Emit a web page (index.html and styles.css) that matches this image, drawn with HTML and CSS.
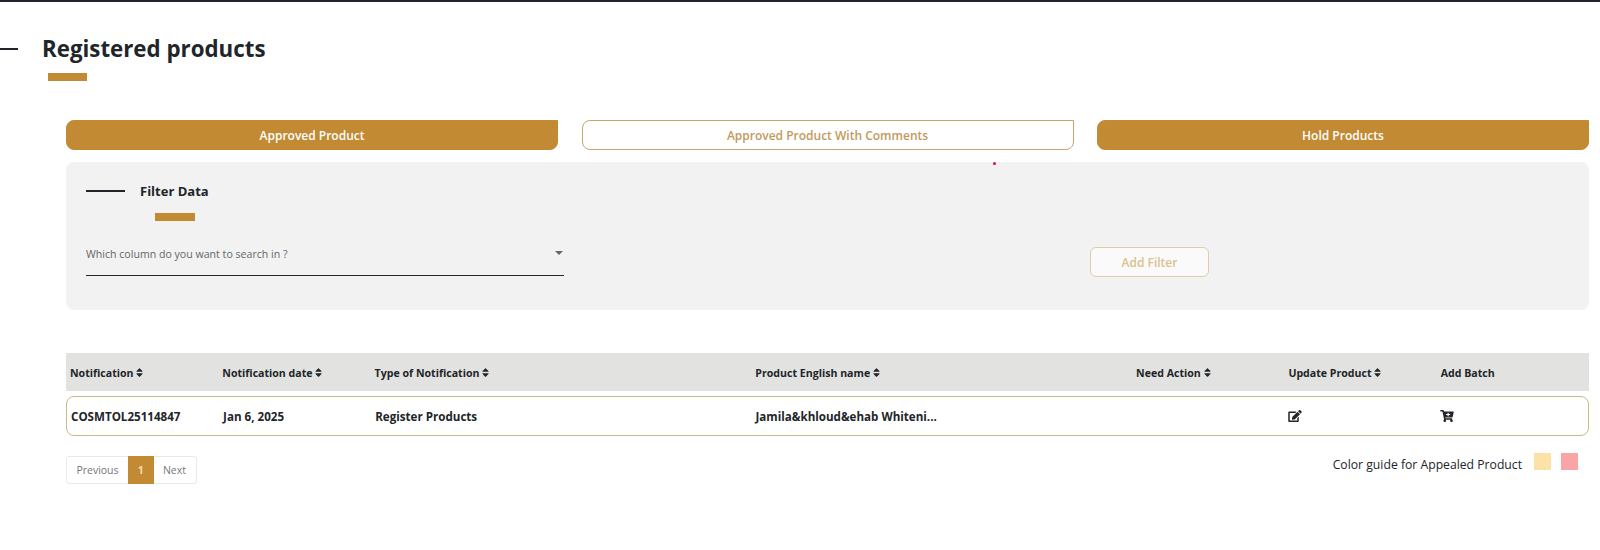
FILE: index.html
```html
<!DOCTYPE html>
<html lang="en">
<head>
<meta charset="utf-8">
<title>Registered products</title>
<link rel="stylesheet" href="styles.css">
</head>
<body>
<svg class="defs" width="0" height="0" aria-hidden="true">
  <symbol id="sort" viewBox="0 0 320 512"><path d="M41 288h238c21.4 0 32.1 25.9 17 41L177 448c-9.4 9.4-24.6 9.4-33.9 0L24 329c-15.1-15.1-4.4-41 17-41zm255-105L177 64c-9.4-9.4-24.6-9.4-33.9 0L24 183c-15.1 15.1-4.4 41 17 41h238c21.4 0 32.1-25.9 17-41z"/></symbol>
</svg>
<header class="page-head">
  <div class="head-line">
    <span class="dash"></span>
    <h1>Registered products</h1>
  </div>
  <span class="accent"></span>
</header>
<main class="content">
  <nav class="tabs">
    <button class="tab solid">Approved Product</button>
    <button class="tab outline">Approved Product With Comments</button>
    <button class="tab solid">Hold Products</button>
  </nav>
  <section class="filter">
    <span class="red-dot"></span>
    <div class="filter-head">
      <span class="filter-dash"></span>
      <h2>Filter Data</h2>
    </div>
    <span class="filter-accent"></span>
    <div class="filter-row">
      <div class="select"><span>Which column do you want to search in ?</span><i class="caret"></i></div>
      <button class="add-filter">Add Filter</button>
    </div>
  </section>
  <section class="table">
    <div class="tr head">
      <div>Notification <svg class="sort"><use href="#sort"/></svg></div>
      <div>Notification date <svg class="sort"><use href="#sort"/></svg></div>
      <div>Type of Notification <svg class="sort"><use href="#sort"/></svg></div>
      <div>Product English name <svg class="sort"><use href="#sort"/></svg></div>
      <div>Need Action <svg class="sort"><use href="#sort"/></svg></div>
      <div>Update Product <svg class="sort"><use href="#sort"/></svg></div>
      <div>Add Batch</div>
    </div>
    <div class="tr row">
      <div>COSMTOL25114847</div>
      <div>Jan 6, 2025</div>
      <div>Register Products</div>
      <div>Jamila&amp;khloud&amp;ehab Whiteni...</div>
      <div></div>
      <div><svg class="icon" viewBox="0 0 576 512"><path d="M402.6 83.2l90.2 90.2c3.8 3.8 3.8 10 0 13.8L274.4 405.6l-92.8 10.3c-12.4 1.4-22.9-9.1-21.5-21.5l10.3-92.8L388.8 83.2c3.8-3.8 10-3.8 13.8 0zm162-22.9l-48.8-48.8c-15.2-15.2-39.9-15.2-55.2 0l-35.4 35.4c-3.8 3.8-3.8 10 0 13.8l90.2 90.2c3.8 3.8 10 3.8 13.8 0l35.4-35.4c15.2-15.3 15.2-40 0-55.2zM384 346.2V448H64V128h229.8c3.2 0 6.2-1.3 8.5-3.5l40-40c7.6-7.6 2.2-20.5-8.5-20.5H48C21.5 64 0 85.5 0 112v352c0 26.5 21.5 48 48 48h352c26.5 0 48-21.5 48-48V306.2c0-10.7-12.9-16-20.5-8.5l-40 40c-2.2 2.3-3.5 5.3-3.5 8.5z"/></svg></div>
      <div><svg class="icon" viewBox="0 0 576 512"><path d="M504.717 320H211.572l6.545 32h268.418c15.401 0 26.816 14.301 23.403 29.319l-5.517 24.276C523.112 414.668 536 433.828 536 456c0 31.202-25.519 56.444-56.824 55.994-29.823-.429-54.35-24.631-55.155-54.447-.44-16.287 6.085-31.049 16.803-41.548H231.176C241.553 426.165 248 440.326 248 456c0 31.813-26.528 57.431-58.67 55.938-28.54-1.325-51.751-24.385-53.251-52.917-1.158-22.034 10.436-41.455 28.051-51.586L93.883 64H24C10.745 64 0 53.255 0 40V24C0 10.745 10.745 0 24 0h102.529c11.401 0 21.228 8.021 23.513 19.19L159.208 64H551.99c15.401 0 26.816 14.301 23.403 29.319l-47.273 208C525.637 312.246 515.923 320 504.717 320zM408 168h-48v-40c0-8.837-7.163-16-16-16h-16c-8.837 0-16 7.163-16 16v40h-48c-8.837 0-16 7.163-16 16v16c0 8.837 7.163 16 16 16h48v40c0 8.837 7.163 16 16 16h16c8.837 0 16-7.163 16-16v-40h48c8.837 0 16-7.163 16-16v-16c0-8.837-7.163-16-16-16z"/></svg></div>
    </div>
  </section>
  <footer class="table-foot">
    <div class="pager">
      <span class="page">Previous</span>
      <span class="page current">1</span>
      <span class="page">Next</span>
    </div>
    <div class="guide">
      <span class="guide-label">Color guide for Appealed Product</span>
      <span class="swatch yellow"></span>
      <span class="swatch pink"></span>
    </div>
  </footer>
</main>
</body>
</html>
```
FILE: styles.css
```css
* { box-sizing: border-box; }
html, body { height: 100%; }
body {
  margin: 0;
  background: #fff;
  color: #212529;
  font-family: "Open Sans", "Noto Sans", "Liberation Sans", sans-serif;
  border-top: 2px solid #23262f;
  overflow: hidden;
}
.defs { position: absolute; }
.page-head { padding-top: 30px; height: 118px; }
.head-line { display: flex; align-items: center; height: 34px; gap: 24.5px; }
.dash { width: 17.5px; height: 1.5px; background: #212529; }
h1 { margin: 0; font-size: 22.3px; font-weight: 700; line-height: 34px; }
.accent { display: block; width: 39px; height: 8px; margin: 7px 0 0 48px; background: #c18a33; }
.content { margin: 0 11px 0 66px; }
.tabs { display: flex; justify-content: space-between; }
.tab {
  width: 492px; height: 30px; padding: 0;
  border-radius: 8px 0 8px 8px;
  font: 600 12px "Open Sans", sans-serif;
}
.solid { background: #c18a33; border: 1px solid #c18a33; color: #fff; }
.outline { background: #fff; border: 1px solid #c9a36b; color: #c39a5c; }
.filter {
  position: relative;
  height: 148px; margin-top: 12px; padding: 20px 20px 0;
  background: #f2f2f2; border-radius: 8px;
}
.red-dot {
  position: absolute; left: 927px; top: 0;
  width: 3px; height: 3px; border-radius: 50%; background: #d8133f;
}
.filter-head { display: flex; align-items: center; gap: 15px; height: 18px; }
.filter-dash { width: 39px; height: 1.5px; background: #212529; }
h2 { margin: 0; font-size: 13px; font-weight: 700; line-height: 18px; }
.filter-accent { display: block; width: 40px; height: 8px; margin: 13px 0 0 69px; background: #c18a33; }
.filter-row { display: flex; align-items: flex-end; margin-top: 17px; }
.select {
  display: flex; justify-content: space-between; align-items: center;
  width: 478px; height: 38px; padding: 0 0 6px;
  border-bottom: 1px solid #23262f;
  color: #666; font-size: 10.6px;
}
.caret {
  width: 0; height: 0; margin-right: 1px; margin-bottom: 1px;
  border: 4px solid transparent; border-top-color: #666; border-bottom: 0;
}
.add-filter {
  width: 119px; height: 30px; margin-left: 526px; margin-bottom: -1px; padding: 0;
  background: #fafafa; border: 1px solid #e0cda8; border-radius: 6px;
  color: #dcc08f; font: 600 12px "Open Sans", sans-serif;
}
.table { margin-top: 43px; }
.tr {
  display: grid;
  grid-template-columns: 1fr 1fr 2.5fr 2.5fr 1fr 1fr 1fr;
  align-items: center;
  font-size: 10.6px; font-weight: 700;
}
.tr > div { padding-left: 4px; white-space: nowrap; }
.head { height: 38px; padding-top: 1px; background: #e2e2e0; }
.row {
  height: 40px; margin-top: 5px;
  background: #fff; border: 1px solid #cfb886; border-radius: 8px;
  font-size: 11.6px;
}
.sort { width: 7px; height: 11px; vertical-align: -1.5px; fill: #212529; }
.icon { display: block; width: 14px; height: 12px; fill: #212529; }
.table-foot { display: flex; justify-content: space-between; align-items: flex-start; margin-top: 20px; }
.pager {
  display: flex; height: 28px;
  border: 1px solid #e9e9e9; border-radius: 3px;
  font-size: 10.5px; color: #777;
}
.page { display: flex; align-items: center; justify-content: center; width: 61px; }
.page:last-child { width: 42px; }
.current { width: 25.5px; background: #c18a33; color: #f1dcb2; font-weight: 700; margin-top: -1px; margin-bottom: -1px; }
.guide { display: flex; align-items: flex-start; margin-top: -3px; padding-right: 11px; }
.guide-label { font-size: 12.2px; line-height: 16px; margin-top: 4px; color: #212529; }
.swatch { width: 17px; height: 17px; }
.yellow { margin-left: 12px; background: #fde2a8; }
.pink { margin-left: 10px; background: #fba4a8; }
```
